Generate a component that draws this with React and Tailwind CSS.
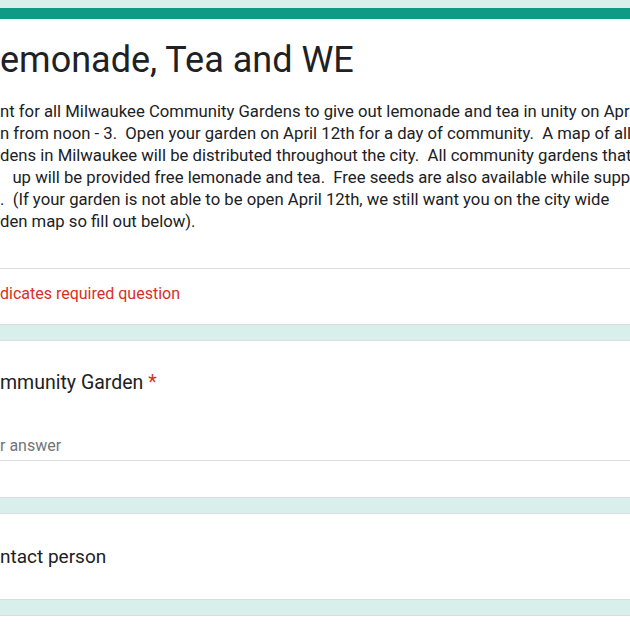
const Cut = ({ pre, children, className = '' }) => (
  <div className={`whitespace-pre ${className}`}>
    <span className="inline-block w-[40px] text-right">{pre}</span>
    {children}
  </div>
);

const descLines = [
  ['eve', 'nt for all Milwaukee Community Gardens to give out lemonade and tea in unity on April 12th'],
  ['noo', 'n from noon - 3.  Open your garden on April 12th for a day of community.  A map of all'],
  ['gar', 'dens in Milwaukee will be distributed throughout the city.  All community gardens that'],
  ['sign', '   up will be provided free lemonade and tea.  Free seeds are also available while supplies'],
  ['last', '.  (If your garden is not able to be open April 12th, we still want you on the city wide'],
  ['gar', 'den map so fill out below).'],
];

const App = () => {
  return (
    <div className="min-h-screen bg-[#d9efec] pt-2 font-['Roboto',sans-serif] text-[#202124] overflow-hidden">
      <div className="ml-[-65px] w-[760px] flex flex-col gap-[15px]">
        <div className="rounded-lg bg-white border border-[#dadce0] border-t-[11px] border-t-[#0f9a86]">
          <div className="px-6 pt-[19px] pb-[35px]">
            <Cut pre="L" className="text-[36px] leading-[44px]">emonade, Tea and WE</Cut>
            <div className="mt-[19px] text-[16.7px] leading-[22px] text-[#202124]">
              {descLines.map(([pre, rest], i) => (
                <Cut key={i} pre={pre}>{rest}</Cut>
              ))}
            </div>
          </div>
          <div className="border-t border-[#dadce0] px-6 pt-[14px] pb-[19px]">
            <Cut pre="* In" className="text-[16px] leading-[22px] text-[#d93025]">dicates required question</Cut>
          </div>
        </div>

        <div className="rounded-lg bg-white border border-[#dadce0] px-6 pt-[29px] pb-[36px]">
          <Cut pre="Co" className="text-[19.5px] leading-[26px]">
            mmunity Garden <span className="text-[#d93025]">*</span>
          </Cut>
          <div className="mt-[39px] border-b border-[#dadce0] pb-[3px]">
            <Cut pre="You" className="text-[16px] leading-[22px] text-[#70757a]">r answer</Cut>
          </div>
        </div>

        <div className="rounded-lg bg-white border border-[#dadce0] px-6 pt-[30px] pb-[29px]">
          <Cut pre="Co" className="text-[19px] leading-[26px]">ntact person</Cut>
        </div>

        <div className="rounded-lg bg-white border border-[#dadce0] h-[60px]" />
      </div>
    </div>
  );
};

export default App;
